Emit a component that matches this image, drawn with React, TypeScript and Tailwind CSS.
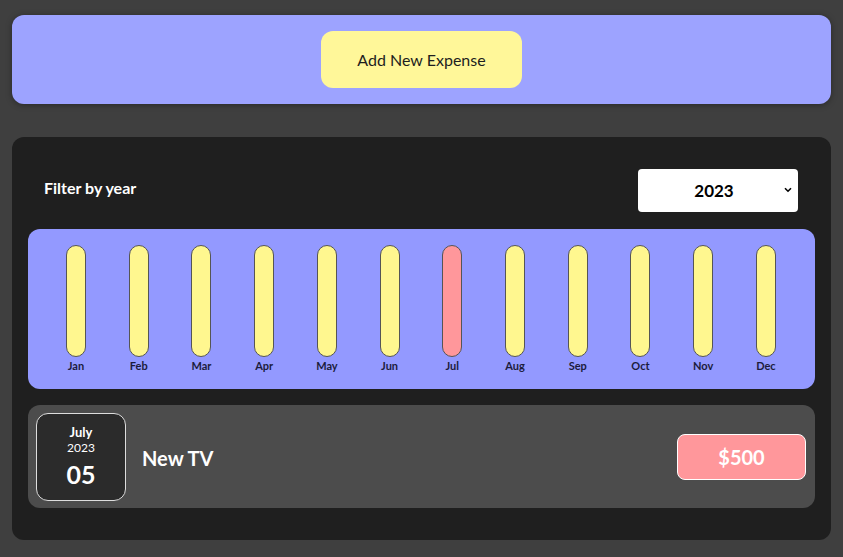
import React from "react";

const months = ["Jan","Feb","Mar","Apr","May","Jun","Jul","Aug","Sep","Oct","Nov","Dec"];

export default function App() {
  return (
    <div className="min-h-[557px] w-full bg-[#3f3f3f] px-3 pt-[15px] pb-4" style={{ fontFamily: "Lato, 'Open Sans', sans-serif" }}>
      <div className="h-[89px] rounded-xl bg-[#9da3ff] shadow-[0_1px_6px_rgba(0,0,0,0.35)] flex items-center justify-center">
        <button className="w-[201px] h-[57px] rounded-xl bg-[#fff799] text-[16px] text-[#1e1e1e]">Add New Expense</button>
      </div>

      <div className="mt-[33px] h-[403px] rounded-xl bg-[#1f1f1f] px-4 pt-8">
        <div className="flex items-center justify-between pl-4 pr-[17px]">
          <span className="text-white font-bold text-[16px] mb-[6px]">Filter by year</span>
          <div className="relative w-[160px] h-[43px] rounded bg-white flex items-center justify-center">
            <span className="font-bold text-[17px] text-black pr-2">2023</span>
            <svg className="absolute right-[6px] top-[18px]" width="8" height="6" viewBox="0 0 8 6"><path d="M1 1.2 L4 4.2 L7 1.2" stroke="#000" strokeWidth="1.6" fill="none" /></svg>
          </div>
        </div>

        <div className="mt-[17px] h-[160px] rounded-xl bg-[#9399ff] pl-[28px] pr-[29px] pt-4 flex justify-between">
          {months.map((m, i) => (
            <div key={m} className="flex flex-col items-center w-[40px]">
              <div className={`w-[20px] h-[112px] rounded-full border border-[#555] ${i === 6 ? "bg-[#ff979b]" : "bg-[#fff78f]"}`} />
              <span className="mt-[1px] text-[11px] font-bold text-[#1c1c3c]">{m}</span>
            </div>
          ))}
        </div>

        <div className="mt-4 h-[103px] rounded-xl bg-[#4c4c4c] pl-2 pr-[9px] flex items-center">
          <div className="w-[90px] h-[88px] rounded-xl border border-[#ddd] bg-[#2b2b2b] flex flex-col items-center justify-center text-white pt-[2px]">
            <span className="text-[13px] font-bold leading-[16px]">July</span>
            <span className="text-[12px] leading-[16px]">2023</span>
            <span className="text-[25px] font-bold leading-[36px]">05</span>
          </div>
          <span className="ml-4 text-white font-bold text-[20px] mt-[2px]">New TV</span>
          <div className="ml-auto w-[129px] h-[46px] rounded-lg border border-white bg-[#ff979b] flex items-center justify-center text-white font-bold text-[20px]">$500</div>
        </div>
      </div>
    </div>
  );
}
